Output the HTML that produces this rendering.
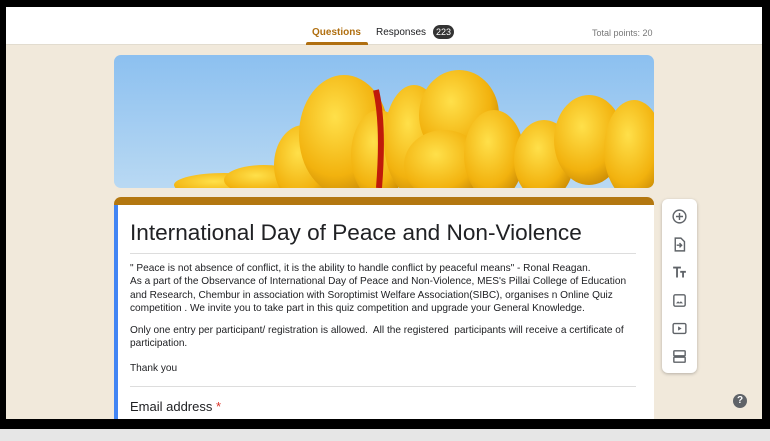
<!DOCTYPE html>
<html><head><style>
*{margin:0;padding:0;box-sizing:border-box}
body{width:770px;height:441px;background:#e6e6e6;position:relative;overflow:hidden;font-family:"Liberation Sans",Arial,sans-serif}
.frame{position:absolute;left:0;top:0;width:770px;height:429px;background:#000}
.inner{position:absolute;left:6px;top:7px;width:756px;height:412px;background:#f1e9db;overflow:hidden}
.hdr{position:absolute;left:0;top:0;width:756px;height:38px;background:#fff;border-bottom:1px solid #e2dccf}
.tab{position:absolute;top:20px;font-size:10px;color:#202124}
.q{left:306px;color:#b06f10;font-weight:bold}
.qline{position:absolute;left:300px;top:35px;width:62px;height:3px;background:#b06f10;border-radius:2px 2px 0 0}
.badge{position:absolute;left:427px;top:18px;width:21px;height:14px;border-radius:7px;background:#333;color:#fff;font-size:9px;text-align:center;line-height:14px}
.tp{position:absolute;left:586px;top:21px;font-size:9px;color:#777}
.banner{position:absolute;left:108px;top:48px;width:540px;height:133px;border-radius:7px;overflow:hidden}
.card{position:absolute;left:108px;top:190px;width:540px;height:230px;background:#fff;border-radius:7px 7px 0 0;overflow:hidden}
.top{position:absolute;left:0;top:0;width:540px;height:8px;background:#b37710}
.left{position:absolute;left:0;top:8px;width:4px;height:230px;background:#4285f4}
h1{position:absolute;left:16px;top:23px;font-weight:normal;font-size:22.6px;color:#202124}
.hr{position:absolute;left:16px;width:506px;height:1px;background:#ddd}
.desc{position:absolute;left:16px;top:65px;font-size:10.1px;line-height:13.3px;color:#202124;width:515px}
.desc p{margin-bottom:9px}
.desc p.t{margin-top:11px}
.email{position:absolute;left:16px;top:202px;font-size:13px;color:#202124}
.side{position:absolute;left:656px;top:192px;width:35px;height:174px;background:#fff;border-radius:6px;box-shadow:0 1px 3px rgba(0,0,0,.25)}
.side svg{position:absolute;left:9px}
.help{position:absolute;left:727px;top:387px;width:14px;height:14px;border-radius:50%;background:#5f6368;color:#fff;font-size:10px;font-weight:bold;text-align:center;line-height:14px}
</style></head><body>
<div class="frame"></div>
<div class="inner">
<div class="hdr">
<div class="tab q">Questions</div><div class="qline"></div>
<div class="tab" style="left:370px">Responses</div>
<div class="badge">223</div>
<div class="tp">Total points: 20</div>
</div>
<div class="banner">
<svg width="540" height="133" viewBox="0 0 540 133">
<defs><linearGradient id="s" x1="0" y1="0" x2="0" y2="1"><stop offset="0" stop-color="#8cc0f0"/><stop offset="1" stop-color="#b9d9f3"/></linearGradient>
<radialGradient id="y" cx=".4" cy=".35" r=".7"><stop offset="0" stop-color="#ffe04a"/><stop offset=".7" stop-color="#f2b20e"/><stop offset="1" stop-color="#c98a05"/></radialGradient></defs>
<rect width="540" height="133" fill="url(#s)"/>
<ellipse cx="110" cy="130" rx="50" ry="12" fill="url(#y)"/>
<ellipse cx="150" cy="125" rx="40" ry="15" fill="url(#y)"/>
<ellipse cx="190" cy="110" rx="30" ry="40" fill="url(#y)"/>
<ellipse cx="230" cy="80" rx="45" ry="60" fill="url(#y)"/>
<ellipse cx="265" cy="100" rx="28" ry="45" fill="url(#y)"/>
<path d="M262 35 Q270 70 265 133" stroke="#c01a0a" stroke-width="6" fill="none"/>
<ellipse cx="300" cy="85" rx="30" ry="55" fill="url(#y)"/>
<ellipse cx="345" cy="60" rx="40" ry="45" fill="url(#y)"/>
<ellipse cx="330" cy="110" rx="40" ry="35" fill="url(#y)"/>
<ellipse cx="380" cy="100" rx="30" ry="45" fill="url(#y)"/>
<ellipse cx="430" cy="105" rx="30" ry="40" fill="url(#y)"/>
<ellipse cx="475" cy="85" rx="35" ry="45" fill="url(#y)"/>
<ellipse cx="520" cy="95" rx="30" ry="50" fill="url(#y)"/>
</svg>
</div>
<div class="card">
<div class="top"></div><div class="left"></div>
<h1>International Day of Peace and Non-Violence</h1>
<div class="hr" style="top:56px"></div>
<div class="desc"><p>" Peace is not absence of conflict, it is the ability to handle conflict by peaceful means" - Ronal Reagan.<br>As a part of the Observance of International Day of Peace and Non-Violence, MES's Pillai College of Education and Research, Chembur in association with Soroptimist Welfare Association(SIBC), organises n Online Quiz competition . We invite you to take part in this quiz competition and upgrade your General Knowledge.</p><p>Only one entry per participant/ registration is allowed.&nbsp; All the registered&nbsp; participants will receive a certificate of participation.</p><p class="t">Thank you</p></div>
<div class="hr" style="top:189px"></div>
<div class="email">Email address <span style="color:#d93025">*</span></div>
</div>
<div class="side">
<svg style="top:9px" width="17" height="17" viewBox="0 0 24 24"><circle cx="12" cy="12" r="9" fill="none" stroke="#5f6368" stroke-width="2"/><path d="M12 7v10M7 12h10" stroke="#5f6368" stroke-width="2"/></svg>
<svg style="top:37px" width="17" height="17" viewBox="0 0 24 24"><path d="M6 3h8l5 5v13H6z" fill="none" stroke="#5f6368" stroke-width="2"/><path d="M8 13h6M12 10l3 3-3 3" stroke="#5f6368" stroke-width="2" fill="none"/></svg>
<svg style="top:65px" width="17" height="17" viewBox="0 0 24 24"><path d="M3 5h11M8.5 5v14M13 11h8M17 11v8" stroke="#5f6368" stroke-width="2.6"/></svg>
<svg style="top:93px" width="17" height="17" viewBox="0 0 24 24"><rect x="4" y="4" width="16" height="16" rx="2" fill="none" stroke="#5f6368" stroke-width="2"/><path d="M7 16l3-3 2 2 2-2 3 3z" fill="#5f6368"/></svg>
<svg style="top:121px" width="17" height="17" viewBox="0 0 24 24"><rect x="3" y="5" width="18" height="14" rx="2" fill="none" stroke="#5f6368" stroke-width="2"/><path d="M10 9l5 3-5 3z" fill="#5f6368"/></svg>
<svg style="top:149px" width="17" height="17" viewBox="0 0 24 24"><rect x="4" y="4" width="16" height="7" rx="1" fill="none" stroke="#5f6368" stroke-width="2"/><rect x="4" y="13" width="16" height="7" rx="1" fill="none" stroke="#5f6368" stroke-width="2"/></svg>
</div>
<div class="help">?</div>
</div>
</body></html>
